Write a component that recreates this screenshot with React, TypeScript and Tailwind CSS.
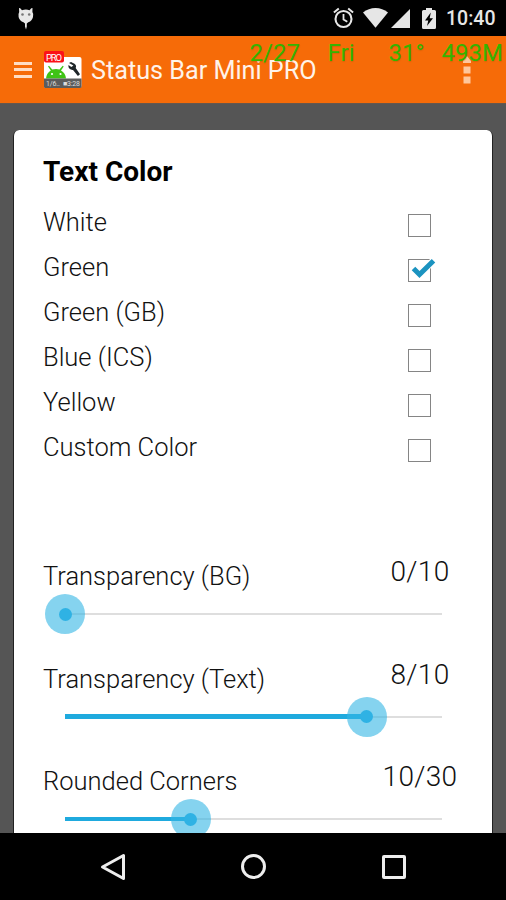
import { useState } from "react";
import clsx from "clsx";

const colors = ["White", "Green", "Green (GB)", "Blue (ICS)", "Yellow", "Custom Color"];

const sliders = [
  { label: "Transparency (BG)", value: 0, max: 10 },
  { label: "Transparency (Text)", value: 8, max: 10 },
  { label: "Rounded Corners", value: 10, max: 30 },
];

function StatusBar() {
  return (
    <div className="flex h-9 shrink-0 items-center bg-black">
      <svg className="ml-[17px] h-[26px] w-[18px]" viewBox="0 0 18 26" fill="#e8e8e8">
        <path d="M2 3 3.200 3.200 5 5.300Q9 3.600 12.500 5.300l1.800-2.100L15.500 3l-.1 4q1.500 2 .6 5-.9 4-4.700 5.200L9.800 18.500v3L9 24.500l-1-3v-3L6.500 17.200Q2.500 16 1.600 12q-.6-3 .6-5z" />
        <circle cx="5.500" cy="9.500" r="1.300" fill="#777" />
        <circle cx="12.200" cy="9.500" r="1.300" fill="#777" />
      </svg>
      <svg className="ml-[298px] h-[22px] w-[21px]" viewBox="0 0 21 22" fill="none" stroke="#e6e6e6">
        <circle cx="10.500" cy="12" r="8" strokeWidth="2.100" />
        <path d="M10.500 7v5.500l3.800 2.300" strokeWidth="1.800" />
        <path d="M.9 5.500 5.800 1.500M15.200 1.500l4.900 4" strokeWidth="2" />
      </svg>
      <svg className="ml-[9px] h-5 w-[25px]" viewBox="0 0 25 20" fill="#e6e6e6">
        <path d="M0 4.500Q5.500 0 12.500 0T25 4.500L12.500 19.800z" />
      </svg>
      <svg className="ml-[3px] h-[19px] w-[19px]" viewBox="0 0 19 19" fill="#e6e6e6">
        <path d="M19 0v19H0z" />
      </svg>
      <svg className="ml-[12px] h-[21px] w-[14px]" viewBox="0 0 14 21">
        <path d="M4 0h6v2h2.500Q14 2 14 3.500v16q0 1.500-1.500 1.500h-11Q0 21 0 19.500v-16Q0 2 1.500 2H4z" fill="#e6e6e6" />
        <path d="M8.800 4.500 3 12.400h3.300L5 18l6-7.700H7.700z" fill="#000" />
      </svg>
      <span className="ml-[10px] mt-[2px] text-[19.5px] font-medium leading-6 text-[#e6e6e6]">10:40</span>
    </div>
  );
}

function AppIcon() {
  return (
    <svg className="h-[38px] w-[38px]" viewBox="0 0 38 38">
      <rect y="6" width="37.500" height="31" rx="2" fill="#fff" />
      <path d="M2 27.500q.6-5.500 4.800-8L4 15.500l1-.7 3.200 3.800q4-1 7.300 0l3.200-3.800 1 .7-2.700 4q4.500 2.500 5 8z" fill="#3fc314" />
      <circle cx="8" cy="23" r="1.100" fill="#fff" />
      <circle cx="16.500" cy="23" r="1.100" fill="#fff" />
      <path d="m25 12 2-.9 3.500 1.600q2.400 1.800 1.200 4.200l4.300 6.400-2.100 1.800-4.900-6.200q-3.200.4-4.500-2.700l-.1-2.100 3 2 2-1.700z" fill="#1e2529" />
      <path d="M0 27.500h37.500v8q0 1.500-1.500 1.500H1.500Q0 37 0 35.500z" fill="#5c5c5c" />
      <rect width="20" height="11.500" rx="2" fill="#fb1118" />
      <text x="2" y="9.500" fontSize="9.500" textLength="16" fill="#fff">PRO</text>
      <text x="2" y="35" fontSize="7" textLength="34" fill="#ddd" xmlSpace="preserve">1/6..  ■3:28</text>
    </svg>
  );
}

function AppBar() {
  return (
    <header className="relative flex h-[67px] shrink-0 items-center bg-[#f66b08]">
      <div className="ml-[14px] flex w-[18px] flex-col gap-[3.5px]">
        <i className="h-[3px] bg-[#ffddc4]" />
        <i className="h-[3px] bg-[#ffddc4]" />
        <i className="h-[3px] bg-[#ffddc4]" />
      </div>
      <div className="ml-3">
        <AppIcon />
      </div>
      <h1 className="ml-[9px] mt-[3px] whitespace-nowrap text-[25.2px] leading-8 text-[#fff3ea]">Status Bar Mini PRO</h1>
      <svg className="ml-auto mr-[35px] h-[28px] w-[8px]" viewBox="0 0 8 28" fill="#ffc79c">
        <path d="M4 0 8 5v2H0V5zM.5 10.500h7v7h-7zM.5 20.500h7v7h-7z" />
      </svg>
      {/* the mini status bar floats over the app */}
      <div className="absolute top-[3px] right-[3px] flex text-[24px] leading-7 whitespace-pre text-[#35b400] [text-shadow:0.5px_1px_1px_#a8600060]">
        <span className="w-[78px]">2/27</span>
        <span className="w-[61px]">Fri</span>
        <span className="w-[53px]">31°</span>
        <span>493M</span>
      </div>
    </header>
  );
}

function CheckBox({ checked }: { checked: boolean }) {
  return (
    <span className="relative block h-[23px] w-[23px] border border-[#858585]">
      {checked && (
        <svg className="absolute -top-[2px] left-[1px] h-[21px] w-[26px]" viewBox="0 0 26 21">
          <path d="m4 11 5.500 5.500L23 3" fill="none" stroke="#fff" strokeWidth="7" />
          <path d="m3.500 10.500 6 6L23.500 2.800" fill="none" stroke="#1b93c0" strokeWidth="5" />
        </svg>
      )}
    </span>
  );
}

function Slider({ label, value, max }: (typeof sliders)[number]) {
  const pct = `${(value / max) * 100}%`;
  return (
    <div className="h-[102.6px] shrink-0">
      <div className="flex h-[38px] justify-between">
        <span className="mt-[5px] text-[25.5px] leading-8">{label}</span>
        <span className="mt-px mr-[-7px] w-[100px] text-center text-[28px] leading-8 tracking-[0.3px]">{value}/{max}</span>
      </div>
      <div className="relative mr-[21px] ml-[22px] mt-[1px] flex h-10 items-center">
        <div className="h-[2px] w-full bg-[#dedede]" />
        <div className={clsx("absolute left-0 bg-[#1faade]", max === 10 ? "h-[5px]" : "h-[4px]")} style={{ width: pct }} />
        <div
          className="absolute flex h-10 w-10 -translate-x-1/2 items-center justify-center rounded-full bg-[#33b5e5]/60"
          style={{ left: pct }}
        >
          <div className="h-[13px] w-[13px] rounded-full bg-[#2fb2e4]" />
        </div>
      </div>
    </div>
  );
}

function NavBar() {
  return (
    <nav className="flex h-[67px] shrink-0 items-center bg-black">
      <svg className="ml-[100px] h-[28px] w-[26px]" viewBox="0 0 26 28" fill="none" stroke="#eee" strokeWidth="3" strokeLinejoin="round">
        <path d="M23.500 2.500v23L2.500 14z" />
      </svg>
      <div className="ml-[115px] h-[25px] w-[25px] rounded-full border-[3px] border-[#eee]" />
      <div className="ml-[116px] h-[24px] w-[24px] rounded-[2px] border-[3px] border-[#eee]" />
    </nav>
  );
}

export default function App() {
  const [selected, setSelected] = useState("Green");

  return (
    <div className="flex h-[900px] w-[506px] flex-col overflow-hidden bg-[#555] font-['Roboto',sans-serif]">
      <StatusBar />
      <AppBar />
      <main className="flex min-h-0 flex-1 flex-col overflow-hidden border-t border-[#65574d] px-[13px] pt-[26px]">
        <section className="flex min-h-0 flex-1 flex-col overflow-hidden rounded-t-[6px] border-x-[1.5px] border-[#222] bg-white px-[29px] pt-[26px] font-light text-[#111]">
          <h2 className="text-[28px] font-bold leading-8 text-black">Text Color</h2>
          <ul className="mt-[11px]">
            {colors.map((c) => (
              <li key={c} className="flex h-[45px] justify-between" onClick={() => setSelected(c)}>
                <span className="mt-[7px] text-[25.5px] leading-8">{c}</span>
                <span className="mt-[15px] mr-[32px]">
                  <CheckBox checked={c === selected} />
                </span>
              </li>
            ))}
          </ul>
          <div className="mt-[86px]">
            {sliders.map((s) => (
              <Slider key={s.label} {...s} />
            ))}
          </div>
        </section>
      </main>
      <NavBar />
    </div>
  );
}
